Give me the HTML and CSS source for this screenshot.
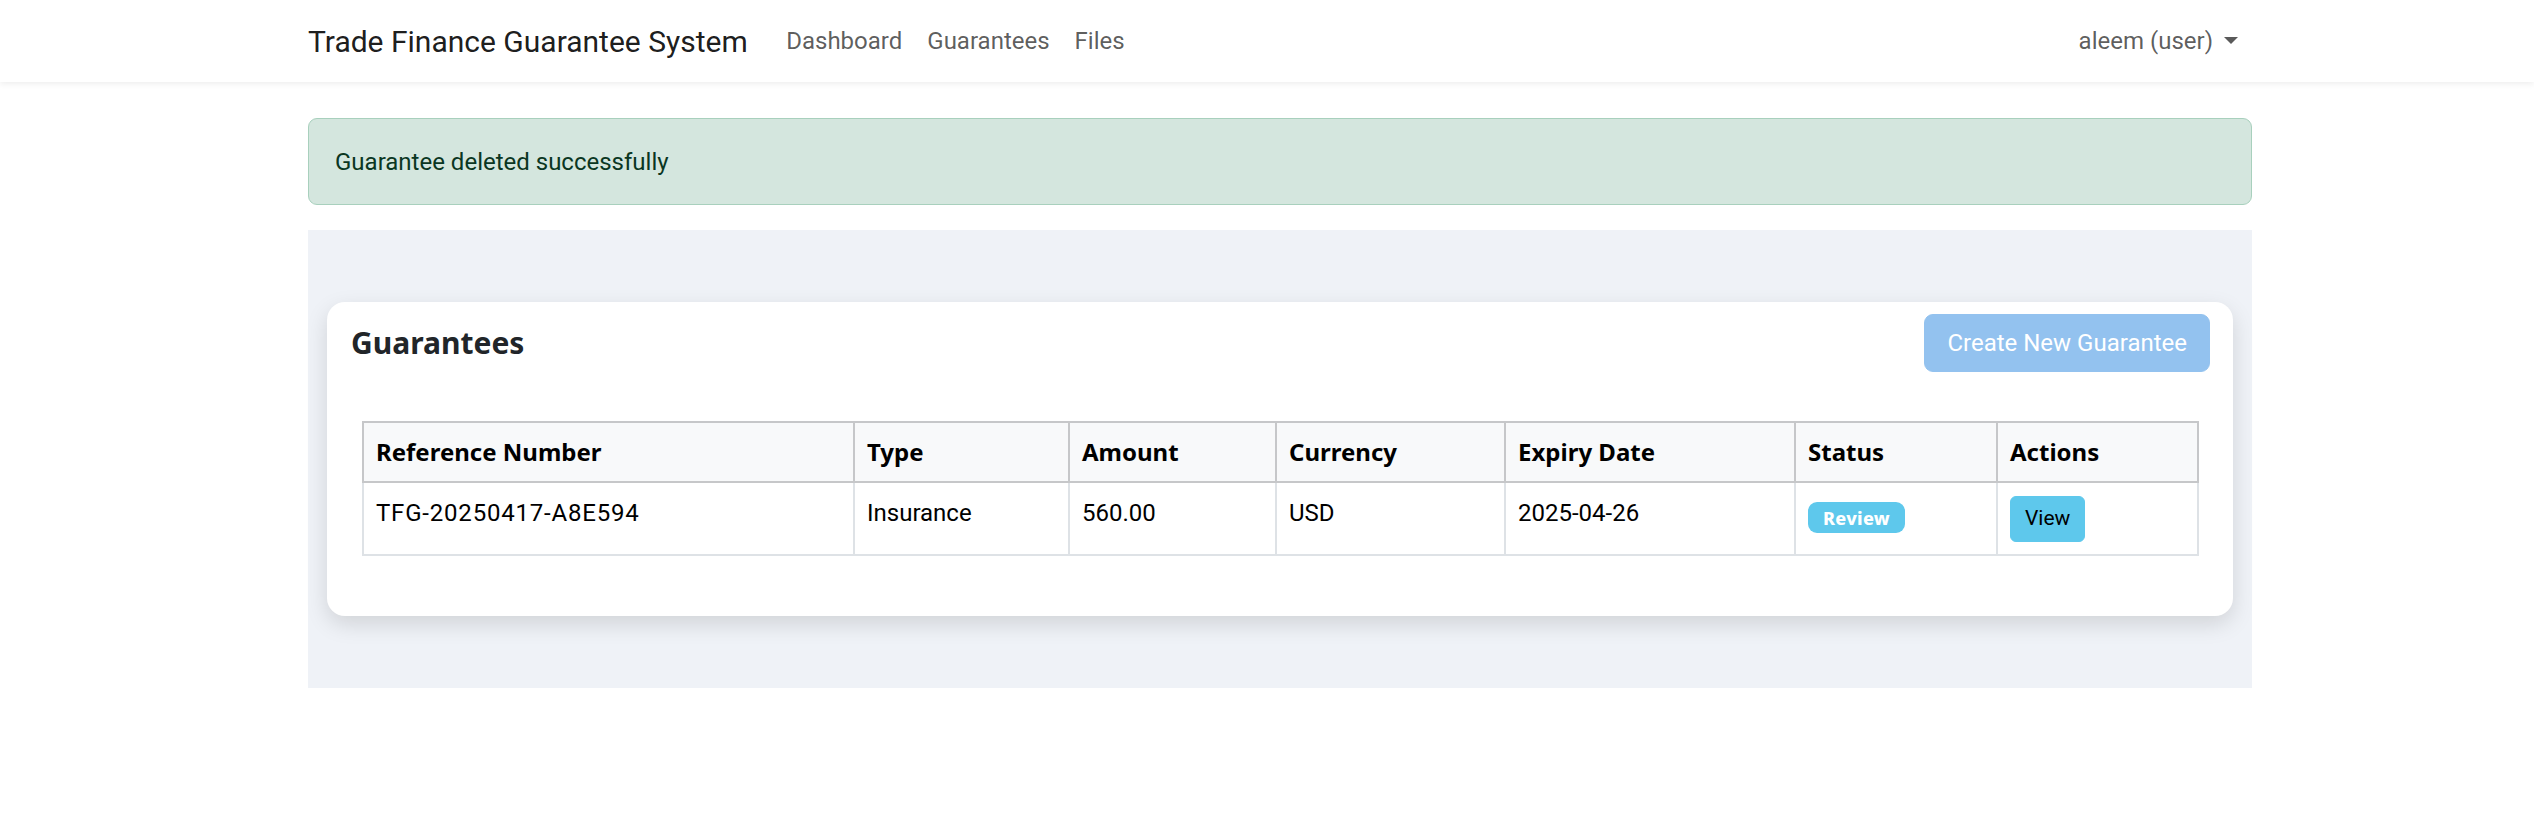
FILE: index.html
```html
<!DOCTYPE html>
<html lang="en">
<head>
<meta charset="utf-8">
<title>Guarantees - Trade Finance Guarantee System</title>
<link rel="stylesheet" href="styles.css">
</head>
<body>
<nav class="navbar">
  <div class="container navbar-inner">
    <a class="brand" href="#">Trade Finance Guarantee System</a>
    <ul class="nav">
      <li><a class="nav-link" href="#">Dashboard</a></li>
      <li><a class="nav-link" href="#">Guarantees</a></li>
      <li><a class="nav-link" href="#">Files</a></li>
    </ul>
    <div class="user-menu">
      <a class="nav-link dropdown-toggle" href="#">aleem (user)<span class="caret"></span></a>
    </div>
  </div>
</nav>

<main class="container main">
  <div class="alert">Guarantee deleted successfully</div>

  <section class="panel">
    <div class="card">
      <div class="card-header">
        <h5 class="card-title">Guarantees</h5>
        <a class="btn-create" href="#">Create New Guarantee</a>
      </div>
      <div class="card-body">
        <table class="table">
          <colgroup>
            <col class="c-ref"><col class="c-type"><col class="c-amount"><col class="c-cur"><col class="c-exp"><col class="c-status"><col class="c-act">
          </colgroup>
          <thead>
            <tr>
              <th>Reference Number</th>
              <th>Type</th>
              <th>Amount</th>
              <th>Currency</th>
              <th>Expiry Date</th>
              <th>Status</th>
              <th>Actions</th>
            </tr>
          </thead>
          <tbody>
            <tr>
              <td class="ref">TFG-20250417-A8E594</td>
              <td>Insurance</td>
              <td>560.00</td>
              <td>USD</td>
              <td>2025-04-26</td>
              <td><span class="badge">Review</span></td>
              <td><a class="btn-view" href="#">View</a></td>
            </tr>
          </tbody>
        </table>
      </div>
    </div>
  </section>
</main>
</body>
</html>
```
FILE: styles.css
```css
* { box-sizing: border-box; }

html, body {
  margin: 0;
  padding: 0;
  background: #ffffff;
}

body {
  font-family: Roboto, "Liberation Sans", sans-serif;
  font-size: 24px;
  line-height: 1.5;
  color: #212529;
}

a { text-decoration: none; }

.container {
  width: 1970px;
  padding-left: 26px;
  margin: 0 auto;
}

/* Navbar */
.navbar {
  background: #ffffff;
  box-shadow: 0 2px 6px rgba(0, 0, 0, 0.07);
}

.navbar-inner {
  display: flex;
  align-items: center;
  height: 82px;
}

.brand {
  font-size: 30px;
  line-height: 45px;
  color: rgba(0, 0, 0, 0.9);
  margin-right: 26px;
  white-space: nowrap;
}

.nav {
  display: flex;
  list-style: none;
  margin: 0;
  padding: 0;
}

.nav-link {
  display: block;
  padding: 0 12.5px;
  color: rgba(0, 0, 0, 0.65);
  white-space: nowrap;
}

.user-menu {
  margin-left: auto;
  margin-right: 2px;
}

.dropdown-toggle {
  display: flex;
  align-items: center;
  padding-right: 12px;
}

.caret {
  display: inline-block;
  margin-left: 11px;
  border-top: 7px solid #5a5a5a;
  border-left: 7px solid transparent;
  border-right: 7px solid transparent;
  margin-top: -2px;
}

/* Main */
.main {
  padding-top: 36px;
}

.alert {
  background: #d4e6de;
  border: 1px solid #a8d0bd;
  border-radius: 9px;
  color: #0a3622;
  padding: 24.5px 26px;
  margin-bottom: 25px;
}

.panel {
  background: #eff2f7;
  padding: 72px 19px;
}

.card {
  background: #ffffff;
  border-radius: 18px;
  box-shadow: 0 8px 22px rgba(0, 0, 0, 0.13);
}

.card-header {
  display: flex;
  align-items: center;
  justify-content: space-between;
  padding: 12px 23px 12px 24px;
}

.card-title {
  margin: 0;
  font-family: "Noto Sans", sans-serif;
  font-weight: 700;
  font-size: 30px;
  line-height: 1.2;
  color: #212529;
}

.btn-create {
  display: inline-block;
  background: #93c2ef;
  border: 1px solid #93c2ef;
  color: #ffffff;
  border-radius: 9px;
  padding: 10px 22px;
  line-height: 36px;
  white-space: nowrap;
}

.card-body {
  padding: 37px 36px 36px 35px;
}

.table {
  width: 100%;
  border-collapse: collapse;
  table-layout: fixed;
  margin-bottom: 24px;
  color: #000;
}

.c-ref { width: 491px; }
.c-type { width: 215px; }
.c-amount { width: 207px; }
.c-cur { width: 229px; }
.c-exp { width: 290px; }
.c-status { width: 202px; }
.c-act { width: 201px; }

.table th {
  background: #f8f9fa;
  font-family: "Noto Sans", sans-serif;
  font-weight: 700;
  text-align: left;
  padding: 11px 12px;
  border: 2px solid #c6c7c9;
  line-height: 36px;
  white-space: nowrap;
}

.table td {
  padding: 12px 12px;
  border: 2px solid #dee2e6;
  vertical-align: top;
  line-height: 36px;
  white-space: nowrap;
}

.table td.ref {
  letter-spacing: 0.8px;
}

.badge {
  display: inline-block;
  vertical-align: top;
  margin-top: 7px;
  background: #5ec8ec;
  color: #ffffff;
  font-family: "Noto Sans", sans-serif;
  font-weight: 800;
  font-size: 18px;
  line-height: 18px;
  padding: 6.5px 15px;
  border-radius: 9px;
  letter-spacing: 0.3px;
}

.btn-view {
  display: inline-block;
  vertical-align: top;
  margin-top: 1px;
  background: #5ec8ec;
  border: 1px solid #5ec8ec;
  color: #000;
  font-size: 21px;
  line-height: 31.5px;
  padding: 6px 14px;
  border-radius: 6px;
}
```
